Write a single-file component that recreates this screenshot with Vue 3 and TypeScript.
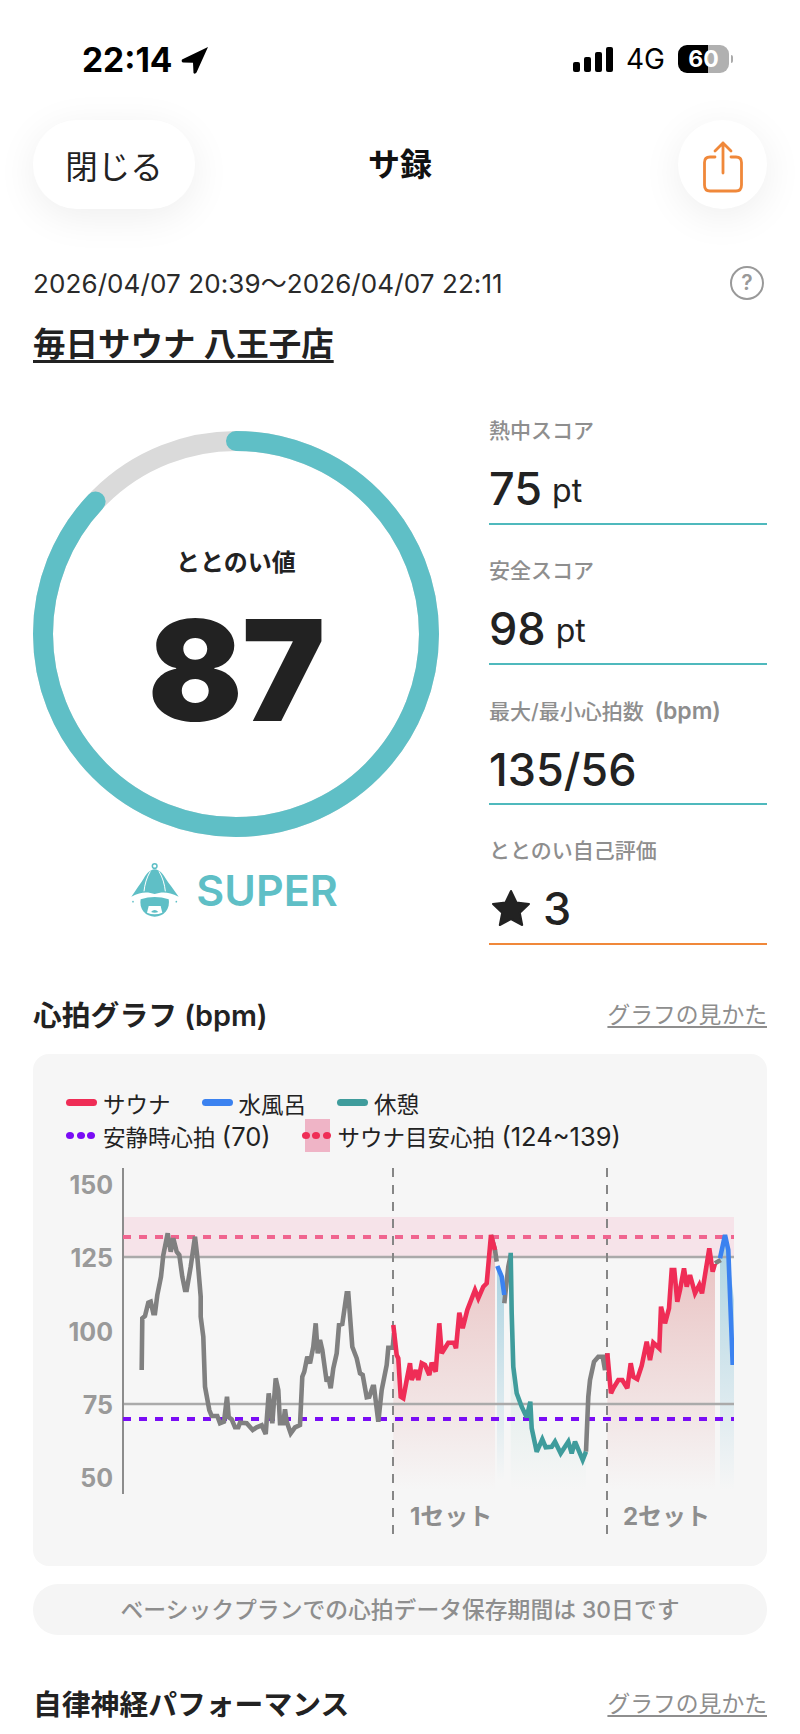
<template>
  <div class="page">
    <div class="status">
      <div class="status-left">
        <span class="clock">22:14</span>
        <svg class="loc" width="28" height="28" viewBox="0 0 28 28"><path d="M27 1 L1 13.500 Q0 16 2 16.500 L12 16.800 L12.500 27 Q14 28.500 15.500 26.500 Z" fill="#000" /></svg>
      </div>
      <div class="status-right">
        <div class="signal"><i v-for="h in [10, 15, 20, 25]" :key="h" :style="{ height: h + 'px' }"></i></div>
        <span class="net">4G</span>
        <div class="batt"><span>60</span></div>
        <i class="batt-tip"></i>
      </div>
    </div>

    <div class="top">
      <button class="close">閉じる</button>
      <div class="title">サ録</div>
      <button class="share">
        <svg width="44" height="56" viewBox="0 0 44 56" fill="none" stroke="#f0883a" stroke-width="2.8" stroke-linecap="round" stroke-linejoin="round">
          <path d="M22 32 V2 M14 10 L22 2 L30 10" />
          <path d="M14 16 H9 Q3.500 16 3.500 21.500 V44 Q3.500 50 9 50 H35 Q40.500 50 40.500 44 V21.500 Q40.500 16 35 16 H30" />
        </svg>
      </button>
    </div>

    <div class="date-row">
      <span class="date">2026/04/07 20:39～2026/04/07 22:11</span>
      <span class="help">?</span>
    </div>
    <div class="venue"><span>毎日サウナ 八王子店</span></div>

    <div class="hero">
      <div class="left">
        <div class="ring">
          <svg width="406" height="406" viewBox="0 0 406 406" fill="none">
            <circle cx="203" cy="203" r="193" stroke="#dadada" stroke-width="20" />
            <circle cx="203" cy="203" r="193" stroke="#5fbfc6" stroke-width="20" stroke-linecap="round"
              :stroke-dasharray="ringDash" transform="rotate(-90 203 203)" />
          </svg>
          <div class="ring-inner">
            <div class="ring-label">ととのい値</div>
            <div class="ring-value">87</div>
          </div>
        </div>
        <div class="rank">
          <svg width="55" height="61" viewBox="30 30 165 183">
            <circle cx="110" cy="48" r="7" fill="none" stroke="#5fbfc6" stroke-width="4.500" />
            <path d="M40 140 C55 118 68 100 78 84 C86 70 96 60 110 58 C124 60 134 70 142 84 C152 100 167 118 182 140 C150 124 130 126 110 132 C90 126 70 124 40 140 Z" fill="#5fbfc6" />
            <path d="M97 64 C86 82 80 104 78 124 M123 64 C134 82 140 104 142 124" fill="none" stroke="#fff" stroke-width="3" />
            <path d="M68 148 Q110 134 152 148 A43 43 0 1 1 68 148 Z" fill="#5fbfc6" />
            <circle cx="45" cy="155" r="2.500" fill="#5fbfc6" />
            <circle cx="175" cy="155" r="2.500" fill="#5fbfc6" />
            <path d="M92 168 H128 L133 188 Q110 198 87 188 Z" fill="#fff" />
            <path d="M99 186 Q110 174 121 186 Q110 190 99 186 Z" fill="#5fbfc6" />
          </svg>
          <span>SUPER</span>
        </div>
      </div>

      <div class="stats">
        <div v-for="s in stats" :key="s.label" class="stat" :class="{ orange: s.star }">
          <div class="stat-label">{{ s.label }}<span v-if="s.sub" class="stat-sub">{{ s.sub }}</span></div>
          <div class="stat-value">
            <svg v-if="s.star" class="star" width="40" height="38" viewBox="0 0 40 38"><path d="M20 2 L25.500 13.500 L38 15 L28.800 23.800 L31.200 36 L20 30 L8.800 36 L11.200 23.800 L2 15 L14.500 13.500 Z" fill="#222" stroke="#222" stroke-width="2" stroke-linejoin="round" /></svg>
            <b>{{ s.value }}</b>
            <small v-if="s.unit">{{ s.unit }}</small>
          </div>
        </div>
      </div>
    </div>

    <div class="sec-head first">
      <div class="sec-title">心拍グラフ (bpm)</div>
      <a class="sec-link">グラフの見かた</a>
    </div>

    <div class="card">
      <div class="legend">
        <div class="lg-row">
          <span v-for="l in legend" :key="l.name" class="lg-item">
            <i class="swatch" :style="{ background: l.color }"></i>{{ l.name }}
          </span>
        </div>
        <div class="lg-row second">
          <span class="lg-item">
            <span class="dots purple"><i></i><i></i><i></i></span>
            <span>安静時心拍 <span class="num">(70)</span></span>
          </span>
          <span class="lg-item target">
            <span class="target-box"></span>
            <span class="dots pink"><i></i><i></i><i></i></span>
            <span>サウナ目安心拍 <span class="num">(124~139)</span></span>
          </span>
        </div>
      </div>

      <svg class="plot" width="734" height="406" viewBox="33 1160 734 406" fill="none">
        <defs>
          <linearGradient id="redFill" x1="0" y1="0" x2="0" y2="1">
            <stop offset="0" stop-color="#dc8c8c" stop-opacity=".5" />
            <stop offset="1" stop-color="#dc8c8c" stop-opacity="0" />
          </linearGradient>
          <linearGradient id="blueFill" x1="0" y1="0" x2="0" y2="1">
            <stop offset="0" stop-color="#8cc4d8" stop-opacity=".7" />
            <stop offset="1" stop-color="#8cc4d8" stop-opacity="0" />
          </linearGradient>
          <linearGradient id="tealFill" x1="0" y1="0" x2="0" y2="1">
            <stop offset="0" stop-color="#80c4b8" stop-opacity=".35" />
            <stop offset="1" stop-color="#80c4b8" stop-opacity="0" />
          </linearGradient>
          <clipPath id="plotClip"><rect x="123" y="1160" width="611" height="400" /></clipPath>
        </defs>

        <text v-for="t in ticks" :key="t.label" class="tick" x="113" :y="t.y" text-anchor="end">{{ t.label }}</text>

        <rect x="123" y="1217" width="611" height="40" fill="#f6e3e9" />
        <path v-for="a in areas" :key="a.key" :d="a.d" :fill="a.fill" />
        <path d="M123 1257 H734 M123 1404 H734" stroke="#aaa" stroke-width="2.500" />
        <path d="M123 1168 V1494" stroke="#8c8c8c" stroke-width="2" />
        <path d="M393 1168 V1534 M607 1168 V1534" stroke="#868686" stroke-width="2" stroke-dasharray="9 8" />
        <path d="M123 1237 H734" stroke="#f0648f" stroke-width="4" stroke-dasharray="8 8" />
        <path d="M123 1419 H734" stroke="#7a0cf5" stroke-width="4" stroke-dasharray="8 8" />

        <g clip-path="url(#plotClip)">
          <polyline v-for="(s, i) in lines" :key="i" :points="s.points" :stroke="s.color" stroke-width="4.600" stroke-linejoin="miter" stroke-miterlimit="3" />
        </g>

        <text class="set" x="410" y="1525">1セット</text>
        <text class="set" x="623" y="1525">2セット</text>
      </svg>
    </div>

    <div class="notice">ベーシックプランでの心拍データ保存期間は 30日です</div>

    <div class="sec-head second">
      <div class="sec-title">自律神経パフォーマンス</div>
      <a class="sec-link">グラフの見かた</a>
    </div>
  </div>
</template>

<script setup lang="ts">
import { computed } from 'vue'

const R = 193
const ringDash = `${2 * Math.PI * R * 0.87} ${2 * Math.PI * R}`

const stats = [
  { label: '熱中スコア', sub: '', value: '75', unit: 'pt', star: false },
  { label: '安全スコア', sub: '', value: '98', unit: 'pt', star: false },
  { label: '最大/最小心拍数 ', sub: '(bpm)', value: '135/56', unit: '', star: false },
  { label: 'ととのい自己評価', sub: '', value: '3', unit: '', star: true },
]

const legend = [
  { name: 'サウナ', color: '#ef2d56' },
  { name: '水風呂', color: '#3b82f0' },
  { name: '休憩', color: '#3f9c9c' },
]

const ticks = [
  { label: '150', y: 1194 },
  { label: '125', y: 1267 },
  { label: '100', y: 1341 },
  { label: '75', y: 1414 },
  { label: '50', y: 1487 },
]

const GRAY = '#808080'
const RED = '#ef2d56'
const BLUE = '#3b82f0'
const TEAL = '#3f9c9c'

// traced from the 3x crops: [x, y] pairs with an origin per run
const runs: { color: string; ox: number; pts: number[] }[] = [
  {
    color: GRAY, ox: 100,
    pts: [125, 570, 127, 415, 135, 408, 145, 368, 152, 365, 160, 400, 165, 400, 172, 345, 183, 290, 190, 225, 203, 160, 212, 215, 220, 175, 230, 215, 238, 225, 247, 290, 255, 330, 260, 330, 272, 260, 285, 170, 292, 230, 298, 300, 302, 350, 302, 410, 310, 470, 315, 620, 328, 690, 335, 708, 352, 708, 360, 730, 372, 725, 381, 650, 386, 712, 395, 718, 405, 742, 415, 742, 420, 728, 440, 730, 458, 750, 470, 742, 485, 736, 497, 762, 506, 640, 517, 730, 527, 595, 535, 630, 540, 730, 550, 730, 555, 688, 560, 725, 572, 760, 585, 742, 600, 735, 607, 590, 613, 575, 622, 530, 630, 550, 640, 500, 647, 430, 653, 520, 660, 480, 667, 510, 680, 605, 685, 590, 692, 625, 700, 565, 710, 520, 717, 435, 727, 432, 740, 340, 745, 340, 757, 500, 770, 535, 780, 580, 788, 585, 800, 652, 808, 650, 818, 620, 822, 620, 835, 725, 845, 630, 860, 555, 865, 503, 878, 503, 882, 460],
  },
  { color: GRAY, ox: 380, pts: [333, 165, 345, 210, 350, 245] },
  { color: GRAY, ox: 380, pts: [373, 370, 385, 260, 392, 225] },
  { color: GRAY, ox: 380, pts: [618, 815, 625, 650, 630, 600, 642, 545, 655, 530, 668, 530, 675, 570, 682, 520] },
  { color: GRAY, ox: 380, pts: [1005, 250, 1022, 240] },
  {
    color: RED, ox: 380,
    pts: [40, 435, 50, 525, 55, 535, 62, 650, 70, 655, 80, 600, 90, 550, 95, 600, 107, 570, 115, 600, 125, 550, 135, 555, 148, 585, 155, 548, 167, 575, 178, 430, 185, 520, 205, 488, 222, 488, 228, 505, 238, 398, 248, 445, 262, 390, 285, 330, 295, 355, 310, 320, 320, 310, 333, 165, 345, 210],
  },
  { color: BLUE, ox: 380, pts: [352, 258, 365, 290, 373, 345] },
  {
    color: TEAL, ox: 380,
    pts: [392, 218, 395, 400, 400, 560, 410, 640, 425, 680, 440, 712, 451, 665, 455, 745, 470, 815, 487, 778, 497, 802, 515, 800, 525, 785, 542, 820, 565, 785, 575, 820, 585, 785, 608, 840, 618, 815],
  },
  {
    color: RED, ox: 380,
    pts: [682, 520, 693, 640, 700, 625, 715, 600, 727, 600, 742, 625, 752, 550, 760, 590, 772, 597, 785, 557, 800, 485, 810, 540, 820, 488, 838, 505, 843, 380, 855, 430, 867, 385, 875, 270, 883, 270, 892, 365, 900, 330, 912, 265, 920, 320, 930, 285, 945, 340, 958, 315, 966, 340, 975, 285, 988, 205, 998, 275, 1005, 250],
  },
  { color: BLUE, ox: 380, pts: [1020, 235, 1035, 165, 1045, 210, 1058, 555] },
]

const toPage = (ox: number, x: number, y: number) =>
  `${(ox + x / 3).toFixed(1)},${(1180 + y / 3).toFixed(1)}`

const lines = computed(() =>
  runs.map(r => {
    const out: string[] = []
    for (let i = 0; i < r.pts.length; i += 2) out.push(toPage(r.ox, r.pts[i], r.pts[i + 1]))
    return { color: r.color, points: out.join(' ') }
  })
)

const areaPath = (run: number, base: number) => {
  const r = runs[run]
  const out: string[] = []
  for (let i = 0; i < r.pts.length; i += 2) out.push(toPage(r.ox, r.pts[i], r.pts[i + 1]))
  const first = r.ox + r.pts[0] / 3
  const last = r.ox + r.pts[r.pts.length - 2] / 3
  return `M${first.toFixed(1)},${base} L${out.join(' L')} L${last.toFixed(1)},${base} Z`
}

const areas = [
  { key: 'r1', fill: 'url(#redFill)', d: areaPath(5, 1490) },
  { key: 'r2', fill: 'url(#redFill)', d: areaPath(8, 1490) },
  { key: 'b1', fill: 'url(#blueFill)', d: 'M497 1266 L502 1277 L504 1295 V1480 H497 Z' },
  { key: 'b2', fill: 'url(#blueFill)', d: 'M720 1258 L725 1235 L728 1250 L734 1300 V1490 H720 Z' },
  { key: 't1', fill: 'url(#tealFill)', d: areaPath(7, 1490) },
]
</script>

<style scoped>
.page {
  width: 800px;
  height: 1734px;
  overflow: hidden;
  background: #fff;
  color: #222;
  font-family: Inter, "Noto Sans CJK JP", sans-serif;
}

.status {
  height: 120px;
  box-sizing: border-box;
  padding: 43px 67px 0 82px;
  display: flex;
  justify-content: space-between;
  align-items: flex-start;
  color: #000;
}
.status-left {
  display: flex;
  align-items: center;
  gap: 8px;
}
.clock {
  font-size: 33.500px;
  font-weight: 700;
  line-height: 34px;
}
.status-right {
  display: flex;
  align-items: center;
  height: 32px;
}
.signal {
  display: flex;
  align-items: flex-end;
  gap: 4px;
  width: 40px;
  height: 25px;
}
.signal i {
  width: 7px;
  background: #000;
  border-radius: 2px;
}
.net {
  margin-left: 13px;
  font-size: 28px;
  font-weight: 400;
}
.batt {
  margin-left: 13px;
  width: 51px;
  height: 28px;
  border-radius: 9px;
  background: linear-gradient(90deg, #000 59%, #b0b0b0 59%);
  color: #fff;
  font-size: 23px;
  font-weight: 700;
  text-align: center;
  line-height: 28px;
}
.batt-tip {
  width: 2px;
  height: 8px;
  margin-left: 2px;
  background: #aaa;
  border-radius: 0 2px 2px 0;
}

.top {
  height: 89px;
  margin: 0 33px;
  display: flex;
  justify-content: space-between;
  align-items: center;
  position: relative;
}
.close,
.share {
  border: 0;
  background: #fff;
  height: 89px;
  box-shadow: 0 8px 40px rgba(0, 0, 0, 0.07);
  font-family: inherit;
  color: #222;
  padding: 0;
}
.close {
  width: 162px;
  border-radius: 44px;
  font-size: 32.500px;
}
.share {
  width: 89px;
  border-radius: 50%;
  display: flex;
  align-items: center;
  justify-content: center;
  padding-top: 8px;
  box-sizing: border-box;
}
.title {
  position: absolute;
  left: 0;
  right: 0;
  top: 0;
  line-height: 89px;
  text-align: center;
  font-size: 32px;
  font-weight: 700;
  color: #111;
  pointer-events: none;
}

.date-row {
  margin: 57px 33px 0;
  height: 34px;
  display: flex;
  justify-content: space-between;
  align-items: center;
}
.date {
  font-size: 26px;
  letter-spacing: 0.1px;
  color: #2a2a2a;
  padding-bottom: 4px;
}
.help {
  width: 30px;
  height: 30px;
  border: 2.500px solid #999;
  border-radius: 50%;
  margin-right: 3px;
  color: #999;
  font-size: 21px;
  font-weight: 600;
  text-align: center;
  line-height: 30px;
}

.venue {
  margin: 27px 33px 0;
  font-size: 32.500px;
  font-weight: 600;
  line-height: 36px;
}
.venue span {
  text-decoration: underline;
  text-decoration-thickness: 3px;
  text-underline-offset: 4px;
}

.hero {
  margin: 55px 33px 0;
  display: grid;
  grid-template-columns: 406px 278px;
  column-gap: 50px;
}
.left {
  padding-top: 13px;
}
.ring {
  position: relative;
  width: 406px;
  height: 406px;
}
.ring svg {
  display: block;
}
.ring-inner {
  position: absolute;
  inset: 0;
  text-align: center;
}
.ring-label {
  margin-top: 116px;
  font-size: 24px;
  font-weight: 600;
  line-height: 32px;
}
.ring-value {
  margin-top: 16px;
  font-size: 140px;
  font-weight: 900;
  line-height: 150px;
  letter-spacing: -1px;
}
.rank {
  margin-top: 22px;
  height: 62px;
  display: flex;
  align-items: center;
  justify-content: center;
  gap: 13px;
  padding-right: 6px;
  color: #5fbfc6;
  font-size: 43px;
  font-weight: 600;
}

.stat {
  height: 105px;
  margin-bottom: 33px;
  border-bottom: 2px solid #4fb9bd;
  box-sizing: content-box;
}
.stat.orange {
  border-bottom-color: #f0883a;
}
.stat-label {
  padding-top: 1px;
  font-size: 21px;
  line-height: 24px;
  color: #8e8e8e;
  font-weight: 500;
}
.stat-sub {
  font-size: 23px;
  font-weight: 600;
  margin-left: 5px;
}
.stat-value {
  margin-top: 15px;
  height: 60px;
  display: flex;
  align-items: center;
  color: #222;
}
.stat-value b {
  font-size: 45px;
  font-weight: 500;
}
.stat-value small {
  font-size: 32px;
  margin-left: 10px;
  font-weight: 400;
  padding-top: 4px;
}
.star {
  margin: 0 12px 0 2px;
}

.sec-head {
  margin-left: 33px;
  margin-right: 33px;
  height: 36px;
  display: flex;
  justify-content: space-between;
  align-items: center;
}
.sec-head.first {
  margin-top: 17px;
}
.sec-head.second {
  margin-top: 49px;
}
.sec-title {
  font-size: 28.800px;
  font-weight: 600;
  color: #222;
}
.sec-link {
  font-size: 22.800px;
  color: #8e8e8e;
  text-decoration: underline;
  text-underline-offset: 3px;
}

.card {
  margin: 23px 33px 0;
  height: 512px;
  background: #f6f6f6;
  border-radius: 16px;
  box-sizing: border-box;
  padding-top: 32px;
  overflow: hidden;
}
.legend {
  padding-left: 33px;
  font-size: 22.500px;
  color: #222;
}
.lg-row {
  display: flex;
  height: 33px;
  align-items: center;
  gap: 31px;
}
.lg-row.second {
  gap: 31px;
}
.num {
  font-size: 25.500px;
}
.lg-item {
  display: flex;
  align-items: center;
  gap: 6px;
  position: relative;
}
.lg-item.target {
  gap: 5px;
}
.swatch {
  width: 31px;
  height: 7px;
  border-radius: 4px;
}
.dots {
  display: flex;
  gap: 2.500px;
  width: 31px;
  position: relative;
}
.dots i {
  width: 8px;
  height: 7px;
  border-radius: 50%;
}
.purple i {
  background: #7a0cf5;
}
.pink i {
  background: #ef2d56;
}
.target-box {
  position: absolute;
  left: 3px;
  top: -1px;
  width: 25px;
  height: 33px;
  background: #efb4c6;
}
.plot {
  display: block;
  margin-top: 8px;
}
.tick {
  font-size: 25px;
  font-weight: 700;
  fill: #9a9a9a;
}
.set {
  font-size: 24px;
  font-weight: 700;
  fill: #8e8e8e;
}

.notice {
  margin: 18px 33px 0;
  height: 51px;
  border-radius: 25px;
  background: #f5f5f5;
  color: #8e8e8e;
  font-size: 22.800px;
  font-weight: 500;
  line-height: 51px;
  text-align: center;
}
</style>

<style>
html,
body {
  margin: 0;
  background: #fff;
}
</style>
